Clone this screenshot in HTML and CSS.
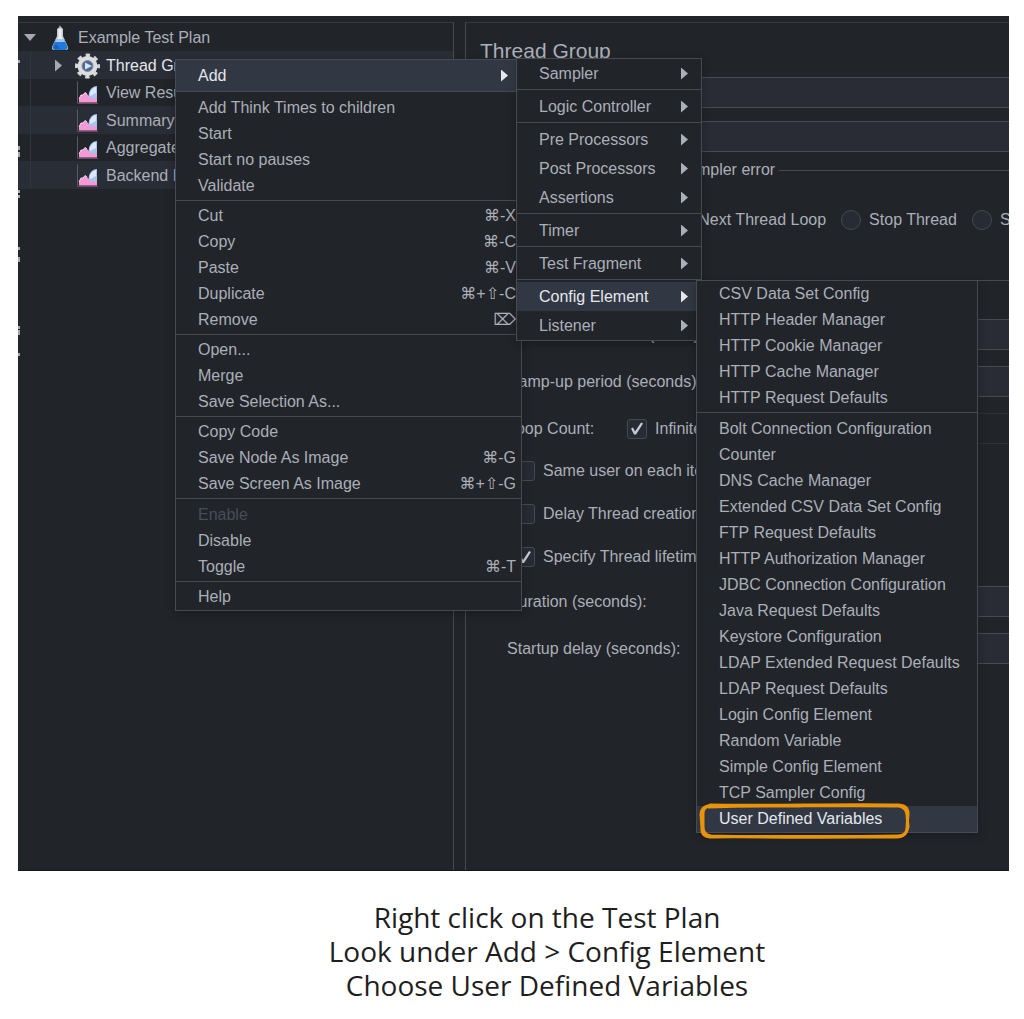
FILE: index.html
```html
<!DOCTYPE html>
<html lang="en">
<head>
  <meta charset="UTF-8" />
  <meta name="viewport" content="width=device-width, initial-scale=1.0" />
  <title>Example Test Plan</title>
  <link rel="stylesheet" href="styles.css">
</head>
<body>
  <!-- shared icons -->
  <svg class="defs" width="0" height="0" aria-hidden="true">
    <symbol id="icon-listener" viewBox="0 0 28 26">
      <path d="M5.500 1.500V23.500" stroke="#5b5863" fill="none" />
      <path d="M6 23.500H26" stroke="#6d4a68" fill="none" />
      <path d="M7 22V19L9 15L11 15L13 12.500L15 14L17 16L20 18L22 16L25 19V22.500H7Z" fill="#f39ad6" />
      <path d="M7 19L9 15L11 15L13 12.500L15 14" stroke="#fbd3ee" fill="none" />
      <path d="M25 6V19L22 18C18 20 16 17 17 13C18 9 21 6 25 6Z" fill="#a9c3ea" />
      <path d="M24 7V13C21 14 19 16 18 16C17 12 20 8 24 7Z" fill="#dbe7fa" />
    </symbol>
  </svg>

  <main class="app">
    <!-- left: test plan tree -->
    <nav class="tree" aria-label="Test plan">
      <svg class="edge" width="2" height="360" viewBox="0 0 2 360" aria-hidden="true">
        <path d="M1 37v3M1 123v4M1 129v5M1 167v3M1 172v3M1 224v3M1 234v5M1 303v3M1 307v5M1 330v3" stroke="#a4a7ad" stroke-width="2" />
      </svg>
      <ul>
        <li class="row root">
          <span class="twisty open"></span>
          <svg class="icon" viewBox="0 0 28 26" aria-hidden="true">
            <path d="M13 4L15.500 2V0L17 2L19 4V11L24 22C24.500 24 23.500 25 22 25H10C8.500 25 7.500 24 8 22L13 11Z" fill="#c5cbd0" />
            <path d="M14.500 4H17.500V12L19 15H13L14.500 12Z" fill="#eef1f3" />
            <path d="M11.500 15H20.500L23.500 22C23.500 24 22 25 21 25H11C10 25 8.500 24 8.500 22Z" fill="#2379d8" />
            <path d="M12 14H20L21 17H11Z" fill="#9dc8f2" />
            <path d="M12 19L16 24H11L9.500 22Z" fill="#1560bd" />
          </svg>
          <span>Example Test Plan</span>
        </li>
        <li class="row selected">
          <span class="twisty"></span>
          <svg class="icon" viewBox="0 0 28 26" aria-hidden="true">
            <circle cx="15.500" cy="13" r="10.500" fill="none" stroke="#d6d7d9" stroke-width="4" stroke-dasharray="4.200 4.047" stroke-dashoffset="2.100" />
            <circle cx="15.500" cy="13" r="7.500" fill="#59657c" stroke="#dcdddf" stroke-width="5" />
            <circle cx="15.500" cy="13" r="5.500" fill="#4e6798" stroke="#8a8f99" />
            <path d="M13 9.500L20 13L13 16.500Z" fill="#d4e4fb" />
          </svg>
          <span>Thread Group</span>
        </li>
        <li class="row">
          <span class="twisty none"></span>
          <svg class="icon" aria-hidden="true"><use href="#icon-listener" /></svg>
          <span>View Results Tree</span>
        </li>
        <li class="row">
          <span class="twisty none"></span>
          <svg class="icon" aria-hidden="true"><use href="#icon-listener" /></svg>
          <span>Summary Report</span>
        </li>
        <li class="row">
          <span class="twisty none"></span>
          <svg class="icon" aria-hidden="true"><use href="#icon-listener" /></svg>
          <span>Aggregate Report</span>
        </li>
        <li class="row">
          <span class="twisty none"></span>
          <svg class="icon" aria-hidden="true"><use href="#icon-listener" /></svg>
          <span>Backend Listener</span>
        </li>
      </ul>
    </nav>

    <!-- right: thread group settings -->
    <section class="editor">
      <form class="form">
        <h1>Thread Group</h1>
        <div class="head-field">
          <label for="name">Name:</label>
          <input type="text" id="name" />
        </div>
        <div class="head-field">
          <label for="comments">Comments:</label>
          <input type="text" id="comments" />
        </div>

        <fieldset>
          <legend>Action to be taken after a Sampler error</legend>
          <div class="radios">
            <label><input type="radio" name="action" />Continue</label>
            <label><input type="radio" name="action" />Start Next Thread Loop</label>
            <label><input type="radio" name="action" />Stop Thread</label>
            <label><input type="radio" name="action" />Stop Test</label>
          </div>
        </fieldset>

        <fieldset>
          <legend>Thread Properties</legend>
          <div class="props">
            <div class="prop">
              <label for="threads">Number of Threads (users):</label>
              <input type="text" id="threads" />
            </div>
            <div class="prop">
              <label for="rampup">Ramp-up period (seconds):</label>
              <input type="text" id="rampup" />
            </div>
            <div class="prop loop">
              <label for="loops">Loop Count:</label>
              <label class="check"><input type="checkbox" checked />Infinite</label>
              <input type="text" id="loops" disabled />
            </div>
          </div>
          <div class="checks">
            <label class="check"><input type="checkbox" />Same user on each iteration</label>
            <label class="check"><input type="checkbox" />Delay Thread creation until needed</label>
            <label class="check"><input type="checkbox" checked />Specify Thread lifetime</label>
          </div>
          <div class="props">
            <div class="prop">
              <label for="duration">Duration (seconds):</label>
              <input type="text" id="duration" />
            </div>
            <div class="prop">
              <label for="delay">Startup delay (seconds):</label>
              <input type="text" id="delay" />
            </div>
          </div>
        </fieldset>
      </form>
    </section>

    <!-- context menu -->
    <ul class="menu context">
      <li class="has-sub">
        <button type="button" class="item tall parent active">Add</button>
        <ul class="menu sub elements">
          <li><button type="button" class="item parent">Sampler</button></li>
          <li class="sep"><button type="button" class="item parent">Logic Controller</button></li>
          <li class="sep"><button type="button" class="item parent">Pre Processors</button></li>
          <li><button type="button" class="item parent">Post Processors</button></li>
          <li><button type="button" class="item parent">Assertions</button></li>
          <li class="sep"><button type="button" class="item parent">Timer</button></li>
          <li class="sep"><button type="button" class="item parent">Test Fragment</button></li>
          <li class="sep has-sub">
            <button type="button" class="item parent active">Config Element</button>
            <ul class="menu sub config">
              <li><button type="button" class="item">CSV Data Set Config</button></li>
              <li><button type="button" class="item">HTTP Header Manager</button></li>
              <li><button type="button" class="item">HTTP Cookie Manager</button></li>
              <li><button type="button" class="item">HTTP Cache Manager</button></li>
              <li><button type="button" class="item">HTTP Request Defaults</button></li>
              <li class="sep roomy"><button type="button" class="item">Bolt Connection Configuration</button></li>
              <li><button type="button" class="item">Counter</button></li>
              <li><button type="button" class="item">DNS Cache Manager</button></li>
              <li><button type="button" class="item">Extended CSV Data Set Config</button></li>
              <li><button type="button" class="item">FTP Request Defaults</button></li>
              <li><button type="button" class="item">HTTP Authorization Manager</button></li>
              <li><button type="button" class="item">JDBC Connection Configuration</button></li>
              <li><button type="button" class="item">Java Request Defaults</button></li>
              <li><button type="button" class="item">Keystore Configuration</button></li>
              <li><button type="button" class="item">LDAP Extended Request Defaults</button></li>
              <li><button type="button" class="item">LDAP Request Defaults</button></li>
              <li><button type="button" class="item">Login Config Element</button></li>
              <li><button type="button" class="item">Random Variable</button></li>
              <li><button type="button" class="item">Simple Config Element</button></li>
              <li><button type="button" class="item">TCP Sampler Config</button></li>
              <li class="marked">
                <button type="button" class="item active">User Defined Variables</button>
                <svg class="marker" viewBox="0 0 212 38" aria-hidden="true">
                  <path d="M11 3C60 4 150 2 199 3Q209 3 209 12L208 26Q208 34 199 34C140 35 60 34 11 35Q2 34 3 26L2 12Q3 4 11 4" />
                  <path d="M9 5C70 3 90 5 110 3.500C150 4 180 4 200 4Q208 6 208 13L209 25Q207 35 198 35C150 35 70 36 12 34Q4 33 4 25L4 11Q4 5 12 3" />
                </svg>
              </li>
            </ul>
          </li>
          <li><button type="button" class="item parent">Listener</button></li>
        </ul>
      </li>
      <li class="sep roomy flush"><button type="button" class="item">Add Think Times to children</button></li>
      <li><button type="button" class="item">Start</button></li>
      <li><button type="button" class="item">Start no pauses</button></li>
      <li><button type="button" class="item">Validate</button></li>
      <li class="sep"><button type="button" class="item">Cut <kbd>⌘-X</kbd></button></li>
      <li><button type="button" class="item">Copy <kbd>⌘-C</kbd></button></li>
      <li><button type="button" class="item">Paste <kbd>⌘-V</kbd></button></li>
      <li><button type="button" class="item">Duplicate <kbd>⌘+⇧-C</kbd></button></li>
      <li><button type="button" class="item">Remove <kbd>⌦</kbd></button></li>
      <li class="sep"><button type="button" class="item">Open...</button></li>
      <li><button type="button" class="item">Merge</button></li>
      <li><button type="button" class="item">Save Selection As...</button></li>
      <li class="sep"><button type="button" class="item">Copy Code</button></li>
      <li><button type="button" class="item">Save Node As Image <kbd>⌘-G</kbd></button></li>
      <li><button type="button" class="item">Save Screen As Image <kbd>⌘+⇧-G</kbd></button></li>
      <li class="sep roomy"><button type="button" class="item" disabled>Enable</button></li>
      <li><button type="button" class="item">Disable</button></li>
      <li><button type="button" class="item">Toggle <kbd>⌘-T</kbd></button></li>
      <li class="sep"><button type="button" class="item">Help</button></li>
    </ul>
  </main>

  <p class="caption">
    Right click on the Test Plan<br />
    Look under Add &gt; Config Element<br />
    Choose User Defined Variables
  </p>
</body>
</html>
```
FILE: styles.css
```css
:root {
  --bg: #212429;
  --stripe: #292d36;
  --active: #323843;
  --field: #292c35;
  --line: #474a50;
  --text: #abafb8;
  --text-bright: #e4e7ee;
}
* {
  box-sizing: border-box;
  margin: 0;
  padding: 0;
}
body {
  display: flex;
  flex-direction: column;
  min-height: 100vh;
  padding: 16px 15px 0 18px;
  background: #ffffff;
  color: var(--text);
  font-family: 'Helvetica Neue', 'Liberation Sans', Arial, 'DejaVu Sans', sans-serif;
  font-size: 16px;
  line-height: 20px;
}
ul {
  list-style: none;
}
button, input {
  font: inherit;
  color: inherit;
}
.defs {
  position: absolute;
}
.app {
  position: relative;
  flex: 1;
  display: grid;
  grid-template-columns: 44% 1fr;
  column-gap: 11px;
  padding-top: 6px;
  background: var(--bg);
  border-bottom: 1px solid #15171a;
}

/* tree */
.tree {
  position: relative;
  padding-top: 1px;
  border-top: 1px solid #363a3f;
  border-right: 1px solid var(--line);
}
.edge {
  position: absolute;
  left: 0;
  top: 0;
}
.row {
  display: flex;
  align-items: center;
  height: 27px;
  padding: 1px 0 0 34px;
  white-space: nowrap;
}
.row:nth-child(even) {
  height: 28px;
  background: var(--stripe);
}
.row.root {
  padding-left: 6px;
}
.row.selected {
  color: var(--text-bright);
}
.row:not(.root) {
  background-image: linear-gradient(#31353c, #31353c);
  background-size: 1px 100%;
  background-position: 12px 0;
  background-repeat: no-repeat;
}
.icon {
  width: 28px;
  height: 26px;
  margin: 0 6px 0 8px;
}
.twisty {
  width: 12px;
  height: 12px;
  background: #a3a8b3;
  clip-path: polygon(3px 0, 10px 6px, 3px 12px);
}
.twisty.open {
  clip-path: polygon(0 2px, 12px 2px, 6px 9px);
}
.twisty.none {
  visibility: hidden;
}

/* editor */
.editor {
  overflow: hidden;
  padding-left: 14px;
  border-top: 1px solid #363a3f;
  border-left: 1px solid var(--line);
}
.form {
  min-width: 620px;
}
h1 {
  padding: 14px 0 12px;
  font-size: 21px;
  line-height: 28px;
  font-weight: 400;
}
input[type='text'] {
  flex: 1;
  height: 31px;
  padding: 0 8px;
  background: var(--field);
  border: 1px solid var(--line);
  outline: none;
}
input[type='text']:disabled {
  background: transparent;
  border-color: #2d3035;
}
.head-field {
  display: flex;
  align-items: center;
  margin-bottom: 13px;
}
.head-field label {
  width: 96px;
}
fieldset {
  border: 0;
  border-top: 1px solid var(--line);
}
.head-field + fieldset {
  margin: -5px 0 40px;
}
legend {
  margin-left: 12px;
  padding: 0 4px 0 3px;
}
.radios {
  display: flex;
  gap: 15px;
  padding: 30px 0 0 45px;
  white-space: nowrap;
}
.radios label, .check {
  display: flex;
  align-items: center;
  gap: 8px;
}
input[type='radio'], input[type='checkbox'] {
  appearance: none;
  width: 20px;
  height: 20px;
  flex: none;
  background: #272b33;
  border: 1px solid #454953;
  border-radius: 3px;
}
input[type='radio'] {
  border-radius: 50%;
}
input[type='checkbox']:checked::before {
  content: '';
  display: block;
  width: 18px;
  height: 18px;
  background: #c6cad2;
  clip-path: polygon(3px 9px, 5px 8px, 7px 12px, 13px 3px, 15px 4px, 8px 15px, 6px 15px);
}
.props {
  display: grid;
  gap: 16px;
  padding: 29px 0 0 27px;
}
.prop {
  display: flex;
  align-items: center;
}
.prop > label:first-child {
  width: 210px;
}
.prop.loop > label:first-child {
  width: 120px;
}
.prop.loop .check {
  width: 160px;
}
.checks {
  display: grid;
  gap: 23px;
  padding: 17px 0 0 35px;
}
.checks + .props {
  padding-top: 19px;
}

/* menus */
.menu {
  position: absolute;
  background: var(--bg);
  border: 1px solid var(--line);
  box-shadow: 0 3px 8px rgba(0, 0, 0, 0.25);
}
.context {
  left: 157px;
  top: 43px;
  width: 347px;
}
.sub {
  left: calc(100% - 5px);
  top: -2px;
  z-index: 1;
}
.elements {
  width: 186px;
}
.config {
  width: 282px;
}
.has-sub, .marked {
  position: relative;
}
.sep {
  margin-top: 1px;
  padding-top: 2px;
  border-top: 1px solid var(--line);
}
.sep.roomy {
  padding-top: 3px;
}
.sep.flush {
  margin-top: 0;
}
.sep.has-sub > .sub {
  top: 0;
}
.item {
  display: flex;
  align-items: center;
  justify-content: space-between;
  width: 100%;
  height: 26px;
  padding: 0 5px 0 22px;
  background: none;
  border: 0;
  text-align: left;
  white-space: nowrap;
}
.elements > li > .item {
  height: 29px;
}
.config > li > .item {
  height: 26px;
}
.context > li > .item.tall {
  height: 31px;
}
.item.parent {
  padding-right: 13px;
}
.item.parent::after {
  content: '';
  width: 7px;
  height: 12px;
  background: currentColor;
  clip-path: polygon(0 0, 100% 50%, 0 100%);
}
.item:hover,
.item.active {
  background: var(--active);
  color: var(--text-bright);
}
.item:disabled {
  color: #474d59;
}
kbd {
  font: inherit;
}
.marker {
  position: absolute;
  left: 2px;
  top: -4px;
  width: 212px;
  height: 38px;
  fill: none;
  stroke: #e8930c;
  stroke-width: 3;
}

/* caption */
.caption {
  padding: 29px 0 17px 67px;
  color: #1e1e1e;
  font-family: Excalifont, 'Open Sans', sans-serif;
  font-size: 28px;
  line-height: 34px;
  text-align: center;
}
```
